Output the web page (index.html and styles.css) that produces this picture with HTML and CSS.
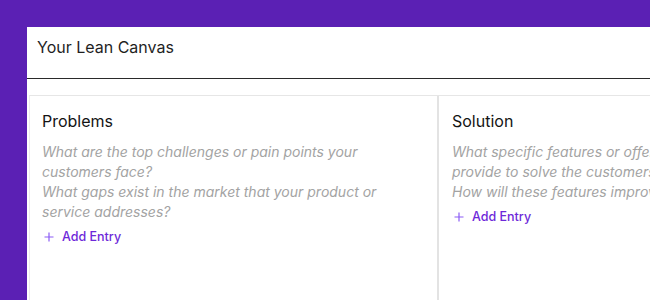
FILE: index.html
```html
<!DOCTYPE html>
<html>
<head>
<meta charset="utf-8">
<link rel="stylesheet" href="styles.css">
</head>
<body>
<div class="panel">
  <div class="header">Your Lean Canvas</div>
  <div class="content">
    <div class="grid">
      <section class="card">
        <h2 class="card-title">Problems</h2>
        <div class="hint">
          <p>What are the top challenges or pain points your customers face?</p>
          <p>What gaps exist in the market that your product or service addresses?</p>
        </div>
        <button class="add">
          <svg class="plus" viewBox="0 0 10 10" width="10" height="10"><path d="M5 0.5V9.5M0.5 5H9.5" stroke="#8b5cf6" stroke-width="1.2" fill="none"/></svg>
          <span>Add Entry</span>
        </button>
      </section>
      <section class="card">
        <h2 class="card-title">Solution</h2>
        <div class="hint">
          <p class="nowrap">What specific features or offerings will you</p>
          <p class="nowrap">provide to solve the customers' problems?</p>
          <p class="nowrap">How will these features improve their experience?</p>
        </div>
        <button class="add">
          <svg class="plus" viewBox="0 0 10 10" width="10" height="10"><path d="M5 0.5V9.5M0.5 5H9.5" stroke="#8b5cf6" stroke-width="1.2" fill="none"/></svg>
          <span>Add Entry</span>
        </button>
      </section>
    </div>
  </div>
</div>
</body>
</html>
```
FILE: styles.css
```css
html, body {
  margin: 0;
  padding: 0;
  height: 100%;
  overflow: hidden;
}
body {
  background: #5b20b4;
  font-family: Inter, "Liberation Sans", sans-serif;
}
.panel {
  margin: 27px 0 0 27px;
  width: 623px;
  height: 273px;
  overflow: hidden;
  background: #fff;
}
.header {
  height: 52px;
  box-sizing: border-box;
  padding: 10px 0 0 10px;
  font-size: 16px;
  line-height: 20px;
  color: #1f1f1f;
  border-bottom: 1px solid #2a2a2a;
}
.content {
  padding: 16px 0 0 2px;
  border-left: 1px solid #2a2a2a;
  margin-left: -1px;
  height: 300px;
}
.grid {
  display: grid;
  grid-template-columns: 409px 409px;
  border-top: 1px solid #e6e6e6;
  border-left: 1px solid #ececec;
  height: 300px;
}
.card {
  padding: 15px 12px 0 12px;
  border-right: 2px solid #e3e3e3;
}
.card + .card {
  padding-left: 13px;
}
.card-title {
  margin: 0;
  font-size: 16px;
  font-weight: 400;
  line-height: 20px;
  color: #141414;
}
.hint {
  margin-top: 11px;
  font-size: 14px;
  line-height: 20px;
  font-style: italic;
  color: #a3a3a3;
  max-width: 370px;
}
.hint p {
  margin: 0;
}
.nowrap {
  white-space: nowrap;
}
.add {
  margin-top: 5px;
  display: flex;
  align-items: center;
  gap: 8px;
  padding: 0 0 0 2px;
  border: 0;
  background: none;
  font-family: inherit;
  font-size: 12.5px;
  font-weight: 500;
  line-height: 20px;
  color: #6d28d9;
  cursor: pointer;
}
.plus {
  display: block;
}
```
